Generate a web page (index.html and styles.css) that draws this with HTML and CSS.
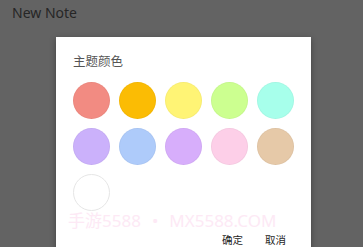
FILE: index.html
```html
<!DOCTYPE html>
<html lang="zh">
<head>
<meta charset="utf-8">
<title>New Note</title>
<link rel="stylesheet" href="styles.css">
</head>
<body>
<header class="topbar">New Note</header>
<div class="dialog">
  <div class="dialog-title">主题颜色</div>
  <div class="swatches">
    <span class="swatch" style="background:#f28b82"></span>
    <span class="swatch" style="background:#fbbc04"></span>
    <span class="swatch" style="background:#fff475"></span>
    <span class="swatch" style="background:#ccff90"></span>
    <span class="swatch" style="background:#a7ffeb"></span>
    <span class="swatch" style="background:#cbb1fb"></span>
    <span class="swatch" style="background:#aecbfa"></span>
    <span class="swatch" style="background:#d7aefb"></span>
    <span class="swatch" style="background:#fdcfe8"></span>
    <span class="swatch" style="background:#e6c9a8"></span>
    <span class="swatch swatch-white" style="background:#ffffff"></span>
  </div>
  <div class="actions">
    <button class="btn">确定</button>
    <button class="btn">取消</button>
  </div>
  <div class="watermark"><span>手游5588</span><span>•</span><span>MX5588.COM</span></div>
</div>
</body>
</html>
```
FILE: styles.css
```css
html, body {
  margin: 0;
  padding: 0;
}
body {
  width: 363px;
  height: 247px;
  overflow: hidden;
  background: #636363;
  font-family: "Noto Sans", "Noto Sans CJK SC", sans-serif;
}
.topbar {
  padding: 4px 12px 0;
  height: 33px;
  box-sizing: border-box;
  font-size: 14px;
  line-height: 18px;
  color: #262626;
}
.dialog {
  position: relative;
  margin-left: 56px;
  margin-top: 4px;
  width: 255px;
  box-sizing: border-box;
  background: #ffffff;
  padding: 15px 25px 20px 17px;
  box-shadow: 0 2px 6px rgba(0, 0, 0, 0.35);
}
.dialog-title {
  font-family: "Noto Sans CJK SC", sans-serif;
  font-size: 12.5px;
  line-height: 18px;
  color: #555555;
}
.swatches {
  display: grid;
  grid-template-columns: repeat(5, 37px);
  gap: 9px;
  margin-top: 12px;
}
.swatch {
  width: 37px;
  height: 37px;
  border-radius: 50%;
  box-sizing: border-box;
  border: 1px solid rgba(0, 0, 0, 0.03);
}
.swatch-white {
  border: 1px solid #e6e6e6;
}
.actions {
  display: flex;
  justify-content: flex-end;
  gap: 22px;
  margin-top: 23px;
}
.btn {
  border: 0;
  background: none;
  padding: 0;
  font-family: "Noto Sans CJK SC", sans-serif;
  font-size: 10.5px;
  line-height: 11px;
  color: #1e1e1e;
}
.watermark {
  position: absolute;
  left: 12px;
  top: 177px;
  display: flex;
  gap: 11px;
  font-family: "Noto Sans", "Noto Sans CJK SC", sans-serif;
  font-size: 17px;
  line-height: 13px;
  color: #fde9f5;
  white-space: nowrap;
  pointer-events: none;
}
```
